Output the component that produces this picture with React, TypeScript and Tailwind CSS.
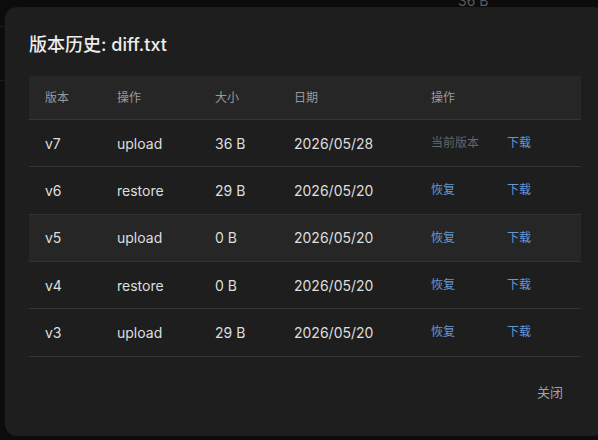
import React from 'react';

type Version = {
  version: string;
  action: string;
  size: string;
  date: string;
  current?: boolean;
};

const versions: Version[] = [
  { version: 'v7', action: 'upload', size: '36 B', date: '2026/05/28', current: true },
  { version: 'v6', action: 'restore', size: '29 B', date: '2026/05/20' },
  { version: 'v5', action: 'upload', size: '0 B', date: '2026/05/20' },
  { version: 'v4', action: 'restore', size: '0 B', date: '2026/05/20' },
  { version: 'v3', action: 'upload', size: '29 B', date: '2026/05/20' },
];

const font = { fontFamily: 'Inter, "Noto Sans CJK SC", sans-serif' };
const cols = 'grid grid-cols-[72px_98px_79px_137px_1fr] items-center';

export default function App() {
  return (
    <div className="relative w-[598px] h-[440px] overflow-hidden bg-[#0c0c0c]" style={font}>
      {/* page behind the overlay */}
      <div className="absolute left-0 top-[26px] w-[20px] h-px bg-[#1c1c1c]" />
      <div className="absolute left-0 top-[80px] w-[20px] h-px bg-[#1c1c1c]" />
      <div className="absolute left-[458px] top-[-10px] text-[14px] text-[#5a5a5a]">36 B</div>

      {/* dialog */}
      <div className="absolute left-[5px] top-[7px] w-[600px] h-[429px] rounded-xl bg-[#1e1e1e] px-6 pt-6 flex flex-col">
        <h2 className="text-[18px] leading-[28px] font-medium text-[#ececec]">版本历史: diff.txt</h2>

        <div className="mt-[17px]">
          <div className={`${cols} h-[44px] bg-[#262626] border-b border-[#363636] text-[12px] text-[#9a9a9a]`}>
            <span className="pl-4">版本</span>
            <span className="pl-4">操作</span>
            <span className="pl-4">大小</span>
            <span className="pl-4">日期</span>
            <span className="pl-4">操作</span>
          </div>
          {versions.map((v, i) => (
            <div
              key={v.version}
              className={`${cols} h-[47.33px] border-b border-[#333333] text-[14px] text-[#dedede] ${
                i === 2 ? 'bg-[#262626]' : ''
              }`}
            >
              <span className="pl-4">{v.version}</span>
              <span className="pl-4">{v.action}</span>
              <span className="pl-4">{v.size}</span>
              <span className="pl-4">{v.date}</span>
              <span className="pl-4 flex items-center text-[12px]">
                {v.current ? (
                  <span className="w-[76px] text-[#666666]">当前版本</span>
                ) : (
                  <button className="w-[76px] text-left text-[#6497d6]">恢复</button>
                )}
                <button className="text-[#6497d6]">下载</button>
              </span>
            </div>
          ))}
        </div>

        <div className="mt-5 flex justify-end pr-[2px]">
          <button className="h-8 px-4 text-[13px] text-[#a3a3a3] rounded-md">关闭</button>
        </div>
      </div>
    </div>
  );
}
